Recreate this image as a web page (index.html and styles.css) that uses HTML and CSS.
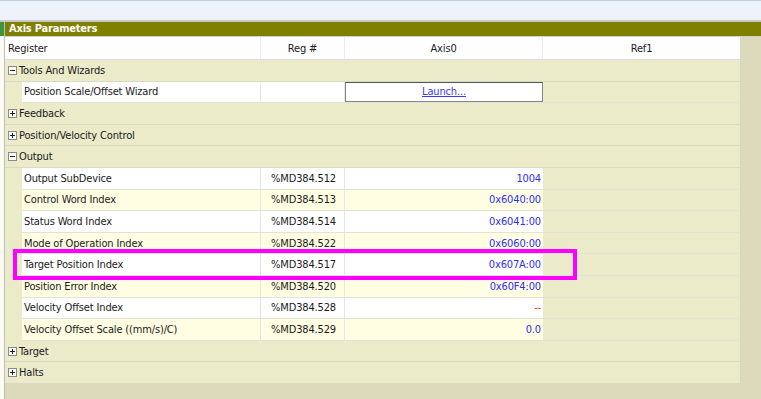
FILE: index.html
```html
<!DOCTYPE html>
<html lang="en">
<head>
    <meta charset="UTF-8">
    <title>Axis Parameters</title>
    <link rel="stylesheet" href="styles.css">
</head>
<body>

    <div class="topbar"></div>

    <div class="main">
        <div class="side"><div class="side-head"></div></div>

        <div class="panel">
            <div class="title">Axis Parameters</div>

            <div class="body">
                <div class="table">
                    <div class="row head">
                        <div class="h-reg">Register</div>
                        <div class="h-col">Reg #</div>
                        <div class="h-col">Axis0</div>
                        <div class="h-col last">Ref1</div>
                    </div>

                    <!-- Tools -->
                    <div class="row group">
                        <svg class="exp" width="9" height="9" viewBox="0 0 9 9"><rect x="0.5" y="0.5" width="8" height="8" fill="#fff" stroke="#8a8a8a"/><path d="M2 4.5h5" stroke="#222"/></svg>
                        Tools And Wizards
                    </div>
                    <div class="kids">
                        <div class="row item white">
                            <div class="c-name">Position Scale/Offset Wizard</div>
                            <div class="c-reg"></div>
                            <div class="c-val launch"><a href="#">Launch...</a></div>
                            <div class="c-ref"></div>
                        </div>
                    </div>

                    <div class="row group">
                        <svg class="exp" width="9" height="9" viewBox="0 0 9 9"><rect x="0.5" y="0.5" width="8" height="8" fill="#fff" stroke="#8a8a8a"/><path d="M2 4.5h5M4.5 2v5" stroke="#222"/></svg>
                        Feedback
                    </div>

                    <div class="row group">
                        <svg class="exp" width="9" height="9" viewBox="0 0 9 9"><rect x="0.5" y="0.5" width="8" height="8" fill="#fff" stroke="#8a8a8a"/><path d="M2 4.5h5M4.5 2v5" stroke="#222"/></svg>
                        Position/Velocity Control
                    </div>

                    <!-- Output -->
                    <div class="row group">
                        <svg class="exp" width="9" height="9" viewBox="0 0 9 9"><rect x="0.5" y="0.5" width="8" height="8" fill="#fff" stroke="#8a8a8a"/><path d="M2 4.5h5" stroke="#222"/></svg>
                        Output
                    </div>
                    <div class="kids">
                        <div class="row item white">
                            <div class="c-name">Output SubDevice</div>
                            <div class="c-reg">%MD384.512</div>
                            <div class="c-val">1004</div>
                            <div class="c-ref"></div>
                        </div>
                        <div class="row item cream">
                            <div class="c-name">Control Word Index</div>
                            <div class="c-reg">%MD384.513</div>
                            <div class="c-val">0x6040:00</div>
                            <div class="c-ref"></div>
                        </div>
                        <div class="row item white">
                            <div class="c-name">Status Word Index</div>
                            <div class="c-reg">%MD384.514</div>
                            <div class="c-val">0x6041:00</div>
                            <div class="c-ref"></div>
                        </div>
                        <div class="row item cream">
                            <div class="c-name">Mode of Operation Index</div>
                            <div class="c-reg">%MD384.522</div>
                            <div class="c-val">0x6060:00</div>
                            <div class="c-ref"></div>
                        </div>
                        <div class="row item white">
                            <div class="c-name">Target Position Index</div>
                            <div class="c-reg">%MD384.517</div>
                            <div class="c-val">0x607A:00</div>
                            <div class="c-ref"></div>
                        </div>
                        <div class="row item cream">
                            <div class="c-name">Position Error Index</div>
                            <div class="c-reg">%MD384.520</div>
                            <div class="c-val">0x60F4:00</div>
                            <div class="c-ref"></div>
                        </div>
                        <div class="row item white">
                            <div class="c-name">Velocity Offset Index</div>
                            <div class="c-reg">%MD384.528</div>
                            <div class="c-val none">--</div>
                            <div class="c-ref"></div>
                        </div>
                        <div class="row item cream">
                            <div class="c-name">Velocity Offset Scale ((mm/s)/C)</div>
                            <div class="c-reg">%MD384.529</div>
                            <div class="c-val">0.0</div>
                            <div class="c-ref"></div>
                        </div>
                    </div>

                    <div class="row group">
                        <svg class="exp" width="9" height="9" viewBox="0 0 9 9"><rect x="0.5" y="0.5" width="8" height="8" fill="#fff" stroke="#8a8a8a"/><path d="M2 4.5h5M4.5 2v5" stroke="#222"/></svg>
                        Target
                    </div>
                    <div class="row group">
                        <svg class="exp" width="9" height="9" viewBox="0 0 9 9"><rect x="0.5" y="0.5" width="8" height="8" fill="#fff" stroke="#8a8a8a"/><path d="M2 4.5h5M4.5 2v5" stroke="#222"/></svg>
                        Halts
                    </div>
                </div>
                <div class="filler"></div>
            </div>
        </div>
    </div>

    <!-- selection marker drawn over the Target Position row -->
    <div class="highlight"></div>

</body>
</html>
```

FILE: styles.css
```css
* {
    box-sizing: border-box;
}

body {
    margin: 0;
    width: 761px;
    height: 399px;
    overflow: hidden;
    position: relative;
    font-family: "DejaVu Sans Condensed", "DejaVu Sans", sans-serif;
    font-size: 11px;
    letter-spacing: -0.15px;
    color: #1a1a1a;
    background-color: #dcdabb;
}

.topbar {
    height: 22px;
    background-color: #eef2fb;
    border-top: 1px solid #c4cde0;
    border-bottom: 2px solid #c8c8c8;
}

.main {
    display: flex;
    height: 377px;
}

.side {
    width: 5px;
    background-color: #fbfbf4;
    border-right: 1px solid #bdbdbd;
}

.side-head {
    height: 14px;
    background-color: #3c963c;
}

.panel {
    flex: 1;
    display: flex;
    flex-direction: column;
}

.title {
    height: 14px;
    line-height: 14px;
    padding-left: 4px;
    background-color: #808000;
    color: #fff;
    font-weight: bold;
    letter-spacing: -0.2px;
}

.body {
    flex: 1;
    display: flex;
    border-top: 1px solid #d2d2d2;
}

.table {
    width: 736px;
    display: flex;
    flex-direction: column;
}

.filler {
    flex: 1;
    background-color: #dcdabb;
}

.row {
    height: 21.6px;
    border-bottom: 1px solid #d9d9c6;
}

.head {
    height: 23px;
    display: grid;
    grid-template-columns: 256px 84px 198px 198px;
    background-color: #fff;
    border-bottom: 1px solid #dcdcdc;
}

.head > div {
    display: flex;
    align-items: center;
}

.h-reg {
    padding-left: 3px;
    border-right: 1px solid #ececec;
}

.h-col {
    justify-content: center;
    border-right: 1px solid #ececec;
}

.h-col.last {
    border-right: 1px solid #d6d6c6;
}

.group {
    display: flex;
    align-items: center;
    gap: 2px;
    padding-left: 3px;
    background-color: #ebebca;
    border-right: 1px solid #d6d6c6;
}

.exp {
    flex: none;
}

.kids {
    padding-left: 17px;
    background-color: #ebebca;
    border-right: 1px solid #d6d6c6;
}

.item {
    display: grid;
    grid-template-columns: 239px 84px 198px 197px;
    border-bottom: 1px solid #e2e2d8;
}

.item > div {
    display: flex;
    align-items: center;
}

.c-name {
    padding-left: 2px;
    border-right: 1px solid #e6e6e6;
}

.c-reg {
    justify-content: flex-end;
    padding-right: 8px;
    border-right: 1px solid #e6e6e6;
}

.c-val {
    justify-content: flex-end;
    padding-right: 2px;
    color: #2e2ef5;
}

.c-val.none {
    color: #ff2a00;
}

.white .c-name,
.white .c-reg,
.white .c-val {
    background-color: #fff;
}

.cream .c-name,
.cream .c-reg,
.cream .c-val {
    background-color: #fffee2;
}

.c-val.launch {
    justify-content: center;
    padding-right: 0;
    border: 1px solid #858585;
    border-top-color: #555;
}

.launch a {
    color: #3a3aff;
}

.highlight {
    position: absolute;
    left: 13px;
    top: 249px;
    width: 564px;
    height: 31px;
    border: 4px solid #ff00ff;
}
```
